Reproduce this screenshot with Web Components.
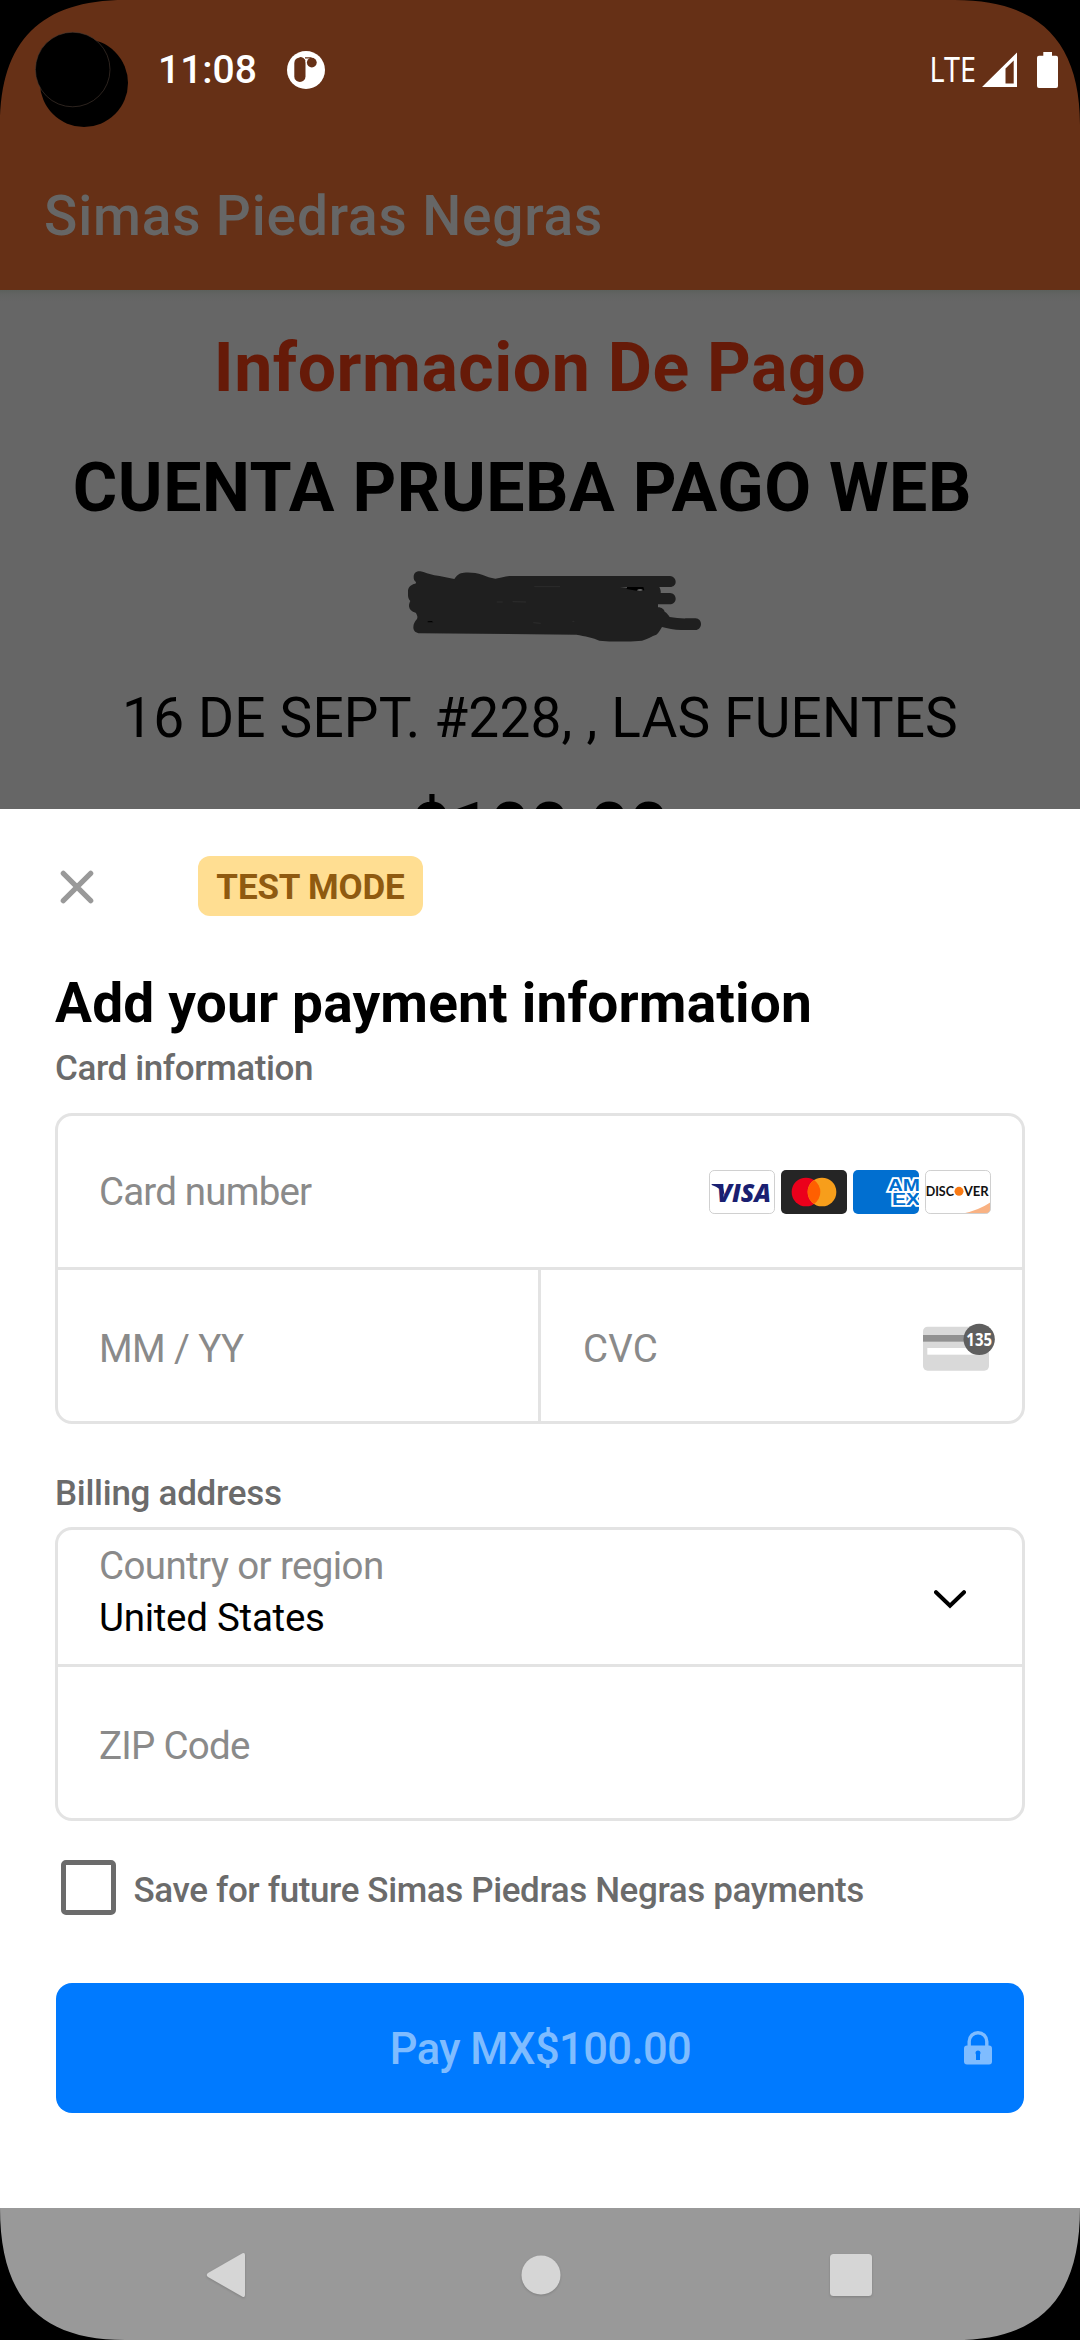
<!DOCTYPE html>
<html lang="es">
<head>
<meta charset="utf-8">
<title>Simas Piedras Negras</title>
<style>
  html, body { margin: 0; background: #000; }
  body { font-family: Roboto, "Noto Sans", sans-serif; }
</style>
</head>
<body>
<phone-screen>
  <status-bar slot="top" time="11:08" network="LTE"></status-bar>
  <app-bar slot="top">Simas Piedras Negras</app-bar>
  <account-summary slot="page"></account-summary>
  <payment-sheet slot="sheet">
    <sheet-header>TEST MODE</sheet-header>
    <sheet-title>Add your payment information</sheet-title>
    <section-label style="margin-top:14px">Card information</section-label>
    <field-group style="margin-top:24px;height:311px">
      <form-field label="Card number" spacing="-.82"><card-brands></card-brands></form-field>
      <field-row>
        <form-field low label="MM / YY" spacing="-.61"></form-field>
        <form-field low divided label="CVC" spacing=".2"><cvc-icon></cvc-icon></form-field>
      </field-row>
    </field-group>
    <section-label style="margin-top:50px;letter-spacing:-.28px">Billing address</section-label>
    <field-group style="margin-top:13px;height:294px">
      <select-field label="Country or region" value="United States"></select-field>
      <form-field low ruled label="ZIP Code" spacing="-.73"></form-field>
    </field-group>
    <save-option>Save for future Simas Piedras Negras payments</save-option>
    <pay-button>Pay MX$100.00</pay-button>
  </payment-sheet>
  <nav-bar slot="bottom"></nav-bar>
</phone-screen>
<script>
const define = (name, render) => customElements.define(name, class extends HTMLElement {
  constructor() {
    super();
    this.attachShadow({ mode: 'open' });
  }
  connectedCallback() {
    this.shadowRoot.innerHTML = render(this);
  }
});

define('phone-screen', () => `
<style>
  :host { display: flex; flex-direction: column; position: relative; width: 1080px; height: 2340px; overflow: hidden; background: #666; }
  .page { height: 519px; overflow: hidden; }
  .sheet { height: 1399px; background: #fff; }
  .corners { position: absolute; left: 0; top: 0; pointer-events: none; }
</style>
<slot name="top"></slot>
<div class="page"><slot name="page"></slot></div>
<div class="sheet"><slot name="sheet"></slot></div>
<slot name="bottom"></slot>
<svg class="corners" width="1080" height="2340" viewBox="0 0 1080 2340">
  <path d="M0 0H125C41 0 0 41 0 125Z"/>
  <path d="M1080 0H955C1039 0 1080 41 1080 125Z"/>
  <path d="M0 2340H125C41 2340 0 2299 0 2208Z"/>
  <path d="M1080 2340H955C1039 2340 1080 2299 1080 2208Z"/>
  <circle cx="84" cy="83" r="44"/>
  <circle cx="72.7" cy="69.5" r="37.3" stroke="#4a3a33" stroke-width=".6"/>
</svg>`);

define('status-bar', el => `
<style>
  :host { display: flex; align-items: center; justify-content: space-between; height: 139px; padding: 0 22px 0 158px; background: #663016; color: #fff; box-sizing: border-box; flex: none; }
  .side { display: flex; align-items: center; }
  .time { width: 128.500px; font-weight: 500; font-size: 39px; line-height: 46px; }
  svg { display: block; }
</style>
<div class="side">
  <span class="time">${el.getAttribute('time')}</span>
  <svg width="38" height="38" viewBox="0 0 38 38">
    <circle cx="19" cy="19" r="19" fill="#fff"/>
    <path d="M12.700 6.600a5.600 5.600 0 0 1 5.300 3.600M18 6.900h6.500" fill="none" stroke="#663016" stroke-width="1.200"/>
    <rect x="7.300" y="6.400" width="11.200" height="24.600" rx="5.600" fill="#663016"/>
    <circle cx="24.800" cy="11.600" r="4.900" fill="#663016"/>
  </svg>
</div>
<div class="side">
  <svg width="60" height="56" viewBox="0 0 60 56"><text x="7.500" y="40.300" font-family="Noto Sans" font-size="34.500" textLength="46.500" lengthAdjust="spacingAndGlyphs" fill="#fff">${el.getAttribute('network')}</text></svg>
  <svg width="35" height="36" viewBox="0 0 35 36"><path fill="#fff" fill-rule="evenodd" d="M35 .5V35H0ZM31.700 8.500L23.500 16.500V31.600H31.700Z"/></svg>
  <svg width="21" height="36" viewBox="0 0 21 36" style="margin-left:20px"><path fill="#fff" d="M6.300 0H15v3.700h4a2 2 0 0 1 2 2V34a2 2 0 0 1-2 2H2a2 2 0 0 1-2-2V5.700a2 2 0 0 1 2-2h4.300Z"/></svg>
</div>`);

define('app-bar', () => `
<style>
  :host { display: flex; align-items: center; height: 151px; padding: 2px 0 0 44px; box-sizing: border-box; flex: none; background: #663016; color: #666; font-size: 55px; font-weight: 500; line-height: 64px; letter-spacing: .83px; }
</style><slot></slot>`);

define('account-summary', () => `
<style>
  :host { display: flex; flex-direction: column; align-items: center; height: 640px; color: #000; background: linear-gradient(#5c605c, #636463 5px, #666 12px); }
  div { white-space: nowrap; flex: none; }
  .title { margin-top: 37.500px; font: 700 68px/80px Roboto, sans-serif; letter-spacing: .52px; color: #661a08; }
  .name { align-self: flex-start; margin: 40px 0 0 72.800px; font: 700 68px/80px Roboto, sans-serif; letter-spacing: .55px; }
  svg { display: block; flex: none; margin-top: 22px; align-self: flex-start; margin-left: 380px; }
  .address { margin-top: 25px; font-size: 55px; line-height: 66px; letter-spacing: .17px; }
  .amount { margin-top: 37px; font: 700 68px/80px Roboto, sans-serif; letter-spacing: .55px; }
</style>
<div class="title">Informacion De Pago</div>
<div class="name">CUENTA PRUEBA PAGO WEB</div>
<svg width="340" height="110" viewBox="0 0 1020 330">
  <path fill="#1f1f1f" d="M101 80C101 69 110 62 121 64C133 66 148 73 163 76C185 79 202 83 223 87C232 74 238 69 252 68C270 66 290 69 306 74C320 79 332 84 346 86C362 84 374 79 388 78H870C880 79 887 86 887 95C887 105 880 110 870 111H838C841 117 843 123 842 129H870C880 130 887 136 887 146C887 156 879 163 869 163H834V172C846 172 852 179 854 185C861 189 865 195 869 201C886 203 905 206 920 205H947C957 206 963 213 963 222C963 232 956 240 946 240H904C883 240 862 234 846 231C841 239 837 248 829 254C815 258 804 267 786 272C745 275 701 276 658 272C640 263 615 259 589 254L120 250C108 250 100 243 100 232C100 221 105 214 111 207C114 200 111 194 107 188C95 185 88 179 87 169C87 160 89 158 91 153C86 148 84 143 84 135V122C85 112 92 103 106 101C110 98 108 95 104 92C101 88 101 84 101 80Z"/>
  <path fill="#000" d="M740 111H790L793 121L770 122L740 117ZM143 214L155 213L160 217H143Z"/>
  <path fill="#666" d="M720 111H741V113ZM770 121Q780 114 789 120Q782 125 770 121Z"/>
  <path fill="none" stroke="#343434" stroke-width="2" d="M463 110H540M350 156H368M398 155L438 156M460 218L482 220M577 214H583"/>
</svg>
<div class="address">16 DE SEPT. #228, , LAS FUENTES</div>
<div class="amount">$100.00</div>`);

define('payment-sheet', () => `
<style>
  :host { display: flex; flex-direction: column; padding: 47px 55px 0; }
</style><slot></slot>`);

define('sheet-header', () => `
<style>
  :host { display: flex; align-items: center; height: 60px; flex: none; }
  svg { display: block; margin: 1px 104px 0 5px; }
  .badge { display: flex; align-items: center; justify-content: center; width: 225px; height: 60px; padding-top: 4px; box-sizing: border-box; border-radius: 12px; background: #ffde92; color: #8f5a10; font-size: 35px; line-height: 42px; font-weight: 700; letter-spacing: -.15px; }
</style>
<svg width="34" height="34" viewBox="0 0 34 34"><path d="M3.300 3.300L30.700 30.700M30.700 3.300L3.300 30.700" stroke="#999" stroke-width="5.200" stroke-linecap="round"/></svg>
<div class="badge"><slot></slot></div>`);

define('sheet-title', () => `
<style>
  :host { display: block; flex: none; margin-top: 55px; font-size: 55px; font-weight: 700; line-height: 64px; letter-spacing: .18px; color: #000; }
</style><slot></slot>`);

define('section-label', () => `
<style>
  :host { display: block; flex: none; font-size: 35px; font-weight: 500; line-height: 40px; letter-spacing: -.4px; color: #6b6b6b; }
</style><slot></slot>`);

define('field-group', () => `
<style>
  :host { display: flex; flex-direction: column; flex: none; box-sizing: border-box; border: 3px solid #e3e3e3; border-radius: 17px; overflow: hidden; }
  ::slotted(*) { flex: 1 1 0; }
</style><slot></slot>`);

define('field-row', () => `
<style>
  :host { display: flex; border-top: 3px solid #e3e3e3; }
  ::slotted(:first-child) { width: 480px; flex: none; }
  ::slotted(:last-child) { flex: 1 1 0; }
</style><slot></slot>`);

define('form-field', el => `
<style>
  :host { display: flex; align-items: center; justify-content: space-between; padding: 0 31px 0 41px; color: #8a8a8a; font-size: 38.500px; line-height: 46px; box-sizing: border-box; }
  :host([low]) { padding-top: 7px; }
  :host([divided]) { border-left: 3px solid #e3e3e3; padding-right: 27px; padding-left: 42px; }
  :host([ruled]) { border-top: 3px solid #e3e3e3; }
  span { letter-spacing: ${el.getAttribute('spacing')}px; }
</style><span>${el.getAttribute('label')}</span><slot></slot>`);

define('select-field', el => `
<style>
  :host { display: flex; justify-content: space-between; flex: 0 0 134px !important; height: 134px; padding: 10px 56px 0 41px; box-sizing: border-box; font-size: 38.500px; line-height: 52px; }
  .label { color: #8a8a8a; letter-spacing: -.62px; }
  .value { color: #000; letter-spacing: -.27px; }
  svg { display: block; margin-top: 50px; }
</style>
<div><div class="label">${el.getAttribute('label')}</div><div class="value">${el.getAttribute('value')}</div></div>
<svg width="32" height="19" viewBox="0 0 32 19"><path d="M2 2.200L16 15.800L30 2.200" fill="none" stroke="#000" stroke-width="4" stroke-linecap="round"/></svg>`);

define('card-brands', () => `
<style>
  :host { display: flex; gap: 6px; margin-top: 1px; }
  svg { display: block; overflow: hidden; }
</style>
<svg width="66" height="44" viewBox="0 0 198 132">
  <rect x="1.500" y="1.500" width="195" height="129" rx="14" fill="#fff" stroke="#d0d0d0" stroke-width="3"/>
  <path d="M8 42H33Q39 43 41 49L48 79Q36 53 8 45Z" fill="#1a1f71"/>
  <text x="23" y="95" font-family="Open Sans" font-weight="800" font-style="italic" font-size="74" textLength="163" lengthAdjust="spacingAndGlyphs" fill="#1a1f71">VISA</text>
</svg>
<svg width="66" height="44" viewBox="0 0 198 132">
  <rect width="198" height="132" rx="15" fill="#252525"/>
  <circle cx="75" cy="66" r="43" fill="#eb001b"/>
  <circle cx="123" cy="66" r="43" fill="#f79e1b"/>
  <path d="M99 30.300A43 43 0 0 1 99 101.700A43 43 0 0 1 99 30.300Z" fill="#ff5f00"/>
</svg>
<svg width="66" height="44" viewBox="0 0 198 132">
  <defs><clipPath id="card"><rect width="198" height="132" rx="15"/></clipPath></defs>
  <g clip-path="url(#card)">
    <rect width="198" height="132" fill="#016fd0"/>
    <g font-family="Liberation Sans" font-weight="700" font-size="48" fill="#016fd0" stroke="#fff" stroke-width="10" paint-order="stroke" stroke-linejoin="miter" stroke-miterlimit="2">
      <text x="105" y="62" textLength="96" lengthAdjust="spacingAndGlyphs">AM</text>
      <text x="117" y="105" textLength="84" lengthAdjust="spacingAndGlyphs">EX</text>
    </g>
  </g>
</svg>
<svg width="66" height="44" viewBox="0 0 198 132">
  <defs><clipPath id="edge"><rect x="1.500" y="1.500" width="195" height="129" rx="14"/></clipPath></defs>
  <rect width="198" height="132" rx="15" fill="#fff"/>
  <path d="M108 132Q160 122 198 96V132Z" fill="#f9b283" clip-path="url(#edge)"/>
  <rect x="1.500" y="1.500" width="195" height="129" rx="14" fill="none" stroke="#d0d0d0" stroke-width="3"/>
  <g font-family="Lato" font-weight="700" font-size="38" fill="#111">
    <text x="2" y="77" textLength="85" lengthAdjust="spacingAndGlyphs">DISC</text>
    <text x="116" y="77" textLength="75" lengthAdjust="spacingAndGlyphs">VER</text>
  </g>
  <circle cx="102" cy="64" r="13.500" fill="#f97a14"/>
</svg>`);

define('cvc-icon', () => `
<style>
  :host { display: block; }
  svg { display: block; }
</style>
<svg width="72" height="50" viewBox="0 0 216 150" style="margin-top:-2px">
  <rect x="0" y="11" width="198" height="132" rx="14" fill="#d9d9d9"/>
  <rect x="0" y="36" width="150" height="20" fill="#919191"/>
  <rect x="13" y="75" width="160" height="20" fill="#fff"/>
  <circle cx="168.500" cy="49" r="47" fill="#5f5f5f"/>
  <text x="130" y="69" font-family="Noto Sans" font-weight="700" font-size="55" textLength="77" lengthAdjust="spacingAndGlyphs" fill="#fff">135</text>
</svg>`);

define('save-option', () => `
<style>
  :host { display: flex; align-items: center; flex: none; height: 55px; margin: 39px 0 68px; padding-left: 6px; color: #6b6b6b; font-size: 35px; font-weight: 500; line-height: 42px; letter-spacing: -.39px; }
  i { width: 55px; height: 55px; box-sizing: border-box; border: 5px solid #6b6b6b; border-radius: 5px; margin-right: 17.500px; }
  div { padding-top: 6px; }
</style><i></i><div><slot></slot></div>`);

define('pay-button', () => `
<style>
  :host { display: grid; grid-template-columns: 1fr auto 1fr; align-items: center; flex: none; height: 130px; margin: 0 1px; padding: 0 32px; box-sizing: border-box; border-radius: 16px; background: #007aff; color: #7fbcff; font-size: 43.500px; font-weight: 500; line-height: 52px; letter-spacing: -.6px; }
  span { grid-column: 2; padding: 3px 0 0 1px; }
  svg { display: block; justify-self: end; }
</style>
<span><slot></slot></span>
<svg width="28" height="34" viewBox="0 0 28 34"><path d="M5.200 16V10.500a8.800 8.800 0 0 1 17.600 0V16" fill="none" stroke="#7fbcff" stroke-width="3.400"/><rect y="14.500" width="28" height="19" rx="3" fill="#7fbcff"/><path d="M14 19.500a2.500 2.500 0 0 1 2.500 2.500c0 .7-.3 1-.5 1.500V29h-4v-5.500c-.2-.5-.5-.8-.5-1.500a2.500 2.500 0 0 1 2.500-2.500Z" fill="#007aff"/></svg>`);

define('nav-bar', () => `
<style>
  :host { display: flex; align-items: center; justify-content: space-between; flex: none; height: 132px; padding: 1px 208px 0 206px; box-sizing: border-box; background: #999; }
  svg { display: block; overflow: visible; filter: drop-shadow(0 1.500px 1px rgba(0,0,0,.16)); }
</style>
<svg width="40" height="46" viewBox="0 0 40 46"><path d="M36.500 1.200Q39 .2 39 3V43Q39 45.800 36.500 44.800L2 25Q-.5 23 2 21Z" fill="#d6d6d6"/></svg>
<svg width="40" height="40" viewBox="0 0 40 40" style="margin-left:5px"><circle cx="20" cy="20" r="19.500" fill="#d6d6d6"/></svg>
<svg width="42" height="42" viewBox="0 0 42 42"><rect width="42" height="42" rx="3.500" fill="#d6d6d6"/></svg>`);
</script>
</body>
</html>
